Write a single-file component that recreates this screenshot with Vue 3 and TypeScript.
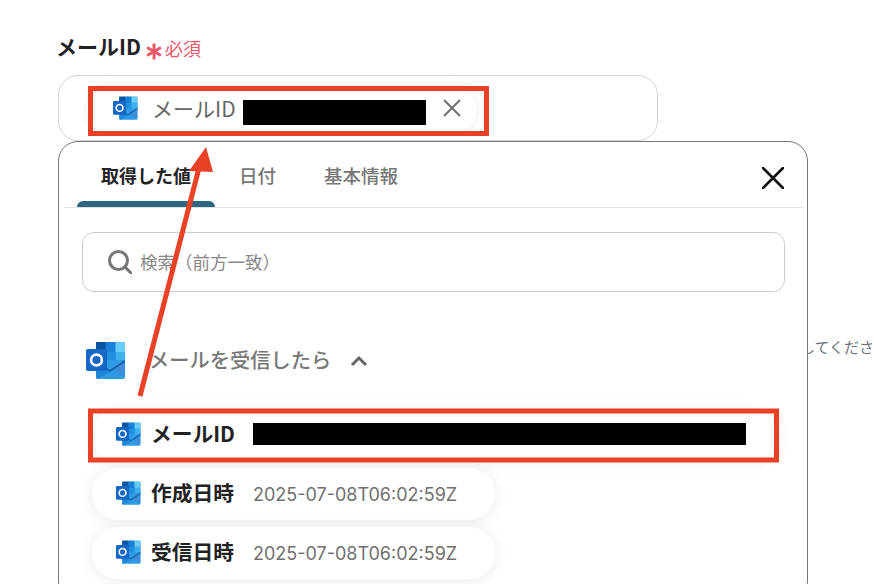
<script setup lang="ts">
interface Row {
  title: string;
  value: string;
}

const tabs = ['取得した値', '日付', '基本情報'];
const rows: Row[] = [
  { title: '作成日時', value: '2025-07-08T06:02:59Z' },
  { title: '受信日時', value: '2025-07-08T06:02:59Z' },
];
</script>

<template>
  <div class="page">
    <svg class="defs" width="0" height="0" aria-hidden="true">
      <symbol id="outlook" viewBox="0 0 40 40">
        <rect x="10" y="1" width="29" height="20" rx="1.5" fill="#0364b8" />
        <rect x="10" y="1" width="9.7" height="10" fill="#0a54a4" />
        <rect x="19.7" y="1" width="9.7" height="10" fill="#1a7fd6" />
        <rect x="29.4" y="1" width="9.6" height="10" fill="#66cdf8" />
        <rect x="10" y="11" width="9.7" height="10" fill="#0f66c0" />
        <rect x="19.7" y="11" width="9.7" height="10" fill="#2090e0" />
        <rect x="29.4" y="11" width="9.6" height="10" fill="#3fb0f0" />
        <path d="M10 19 H39 V36 a2 2 0 0 1 -2 2 H12 a2 2 0 0 1 -2 -2 Z" fill="#2f9ae6" />
        <path d="M39 18 L24 28 L39 36 Z" fill="#3a8fd8" />
        <path d="M10 20 L24 29 L39 19 V21 L24 31 L10 22 Z" fill="#0f5fa8" />
        <path d="M10 22 L24 31 L12 38 a2 2 0 0 1 -2 -2 Z" fill="#1f86da" />
        <rect x="0" y="8" width="21" height="22" rx="2" fill="#1467c5" />
        <circle cx="10.5" cy="19" r="5.4" fill="none" stroke="#fff" stroke-width="2.6" />
      </symbol>
    </svg>

    <div class="label">
      <span class="label-name">メールID</span>
      <span class="label-star">∗</span>
      <span class="label-req">必須</span>
    </div>

    <div class="field">
      <div class="chip">
        <svg class="icon"><use href="#outlook" /></svg>
        <span class="chip-name">メールID</span>
        <span class="redact chip-redact"></span>
        <svg class="chip-x" viewBox="0 0 18 18">
          <path d="M1 1 L17 17 M17 1 L1 17" stroke="#6f6f6f" stroke-width="2" fill="none" />
        </svg>
      </div>
    </div>

    <div class="panel">
      <div class="tabs">
        <div v-for="(tab, i) in tabs" :key="tab" :class="['tab', { active: i === 0 }]">{{ tab }}</div>
        <svg class="close" viewBox="0 0 22 22">
          <path d="M1 1 L21 21 M21 1 L1 21" stroke="#111" stroke-width="2.6" stroke-linecap="round" fill="none" />
        </svg>
      </div>

      <div class="body">
        <div class="search">
          <svg class="search-icon" viewBox="0 0 24 24">
            <circle cx="10.5" cy="10.5" r="9" stroke="#777" stroke-width="3" fill="none" />
            <path d="M17 17 L23 23" stroke="#777" stroke-width="3" stroke-linecap="round" />
          </svg>
          <span class="search-text">検索（前方一致）</span>
        </div>

        <div class="section">
          <svg class="section-icon"><use href="#outlook" /></svg>
          <span class="section-name">メールを受信したら</span>
          <svg class="chevron" viewBox="0 0 18 12">
            <path d="M2 10 L9 3 L16 10" stroke="#666" stroke-width="3" fill="none" />
          </svg>
        </div>

        <div class="rows">
          <div class="row row-wide">
            <svg class="icon"><use href="#outlook" /></svg>
            <span class="row-title">メールID</span>
            <span class="redact row-redact"></span>
          </div>
          <div v-for="row in rows" :key="row.title" class="row">
            <svg class="icon"><use href="#outlook" /></svg>
            <span class="row-title">{{ row.title }}</span>
            <span class="row-value">{{ row.value }}</span>
          </div>
        </div>
      </div>
    </div>

    <div class="behind">してください</div>

    <!-- annotation on top of the screenshot -->
    <svg class="marks" width="874" height="584" viewBox="0 0 874 584">
      <rect x="90.5" y="88.5" width="396" height="45" fill="none" stroke="#e94125" stroke-width="5" />
      <rect x="90.5" y="411" width="686" height="49" fill="none" stroke="#e94125" stroke-width="5" />
      <path d="M140 396 L199 168" stroke="#e94125" stroke-width="5" fill="none" />
      <path d="M206 147 L189 171 L213 172 Z" fill="#e94125" />
    </svg>
  </div>
</template>

<style scoped>
.page {
  position: relative;
  width: 874px;
  height: 584px;
  overflow: hidden;
  box-sizing: border-box;
  padding: 34px 0 0 58px;
  background: #fff;
  font-family: "Noto Sans CJK JP", "Noto Sans", sans-serif;
  color: #222;
}

.defs {
  position: absolute;
}

.label {
  display: flex;
  align-items: center;
  height: 28px;
  margin-bottom: 13px;
}

.label-name {
  margin-left: -2px;
  padding-bottom: 4px;
  font-size: 21px;
  font-weight: 700;
  color: #222;
}

.label-star {
  margin-left: 3px;
  font-size: 24px;
  font-weight: 700;
  color: #eb5a6a;
}

.label-req {
  margin-left: 1px;
  font-size: 18px;
  color: #eb5a6a;
}

.field {
  box-sizing: border-box;
  width: 600px;
  height: 66px;
  padding: 9px 0 0 28px;
  border: 1px solid #cfd4da;
  border-radius: 20px;
}

.chip {
  display: flex;
  align-items: center;
  box-sizing: border-box;
  width: 390px;
  height: 48px;
  padding-left: 26px;
  border-radius: 24px;
  background: #fff;
  box-shadow: 0 0 8px rgba(0, 0, 0, 0.08);
}

.icon {
  flex: none;
  width: 25px;
  height: 25px;
  margin-bottom: 1px;
}

.chip-name {
  margin-left: 14px;
  padding-bottom: 2px;
  font-size: 21px;
  color: #666;
}

.redact {
  flex: none;
  background: #000;
}

.chip-redact {
  width: 183px;
  height: 25px;
  margin-top: 6px;
  margin-left: 7px;
}

.chip-x {
  flex: none;
  width: 18px;
  height: 18px;
  margin-left: 17px;
  margin-bottom: 2px;
}

.panel {
  position: relative;
  z-index: 1;
  box-sizing: border-box;
  width: 750px;
  height: 460px;
  border: 1px solid #777;
  border-radius: 20px;
  background: #fff;
}

.tabs {
  position: relative;
  display: flex;
  height: 65px;
  margin: 0 4px 0 5px;
  padding-left: 13px;
  border-bottom: 1px solid #e2e2e2;
}

.tab {
  position: relative;
  box-sizing: border-box;
  padding: 19px 24px 0;
  font-size: 18.5px;
  font-weight: 500;
  line-height: 28px;
  color: #777;
}

.tab.active {
  width: 138px;
  padding-right: 0;
  font-size: 18px;
  font-weight: 700;
  color: #222;
}

.tab.active::after {
  content: "";
  position: absolute;
  left: 0;
  right: 0;
  bottom: 0;
  height: 6px;
  border-radius: 6px 6px 0 0;
  background: #2c6680;
}

.close {
  position: absolute;
  top: 25px;
  right: 19px;
  width: 22px;
  height: 22px;
}

.body {
  padding: 24px 22px 0 23px;
}

.search {
  display: flex;
  align-items: center;
  box-sizing: border-box;
  height: 60px;
  padding-left: 25px;
  border: 1px solid #ccc;
  border-radius: 12px;
  font-size: 17.5px;
  color: #888;
}

.search-text {
  padding-bottom: 2px;
}

.search-icon {
  width: 24px;
  height: 24px;
  margin-right: 8px;
}

.section {
  display: flex;
  align-items: center;
  height: 40px;
  margin-top: 49px;
  padding-left: 4px;
}

.section-icon {
  flex: none;
  width: 40px;
  height: 40px;
}

.section-name {
  margin-left: 23px;
  padding-bottom: 4px;
  font-size: 20.25px;
  font-weight: 500;
  color: #777;
}

.chevron {
  width: 18px;
  height: 12px;
  margin-left: 19px;
}

.rows {
  display: flex;
  flex-direction: column;
  gap: 7px;
  margin-top: 28px;
  margin-left: 10px;
}

.row {
  display: flex;
  align-items: center;
  box-sizing: border-box;
  width: 403px;
  height: 52px;
  padding-left: 24px;
  border-radius: 26px;
  background: #fff;
  box-shadow: 0 2px 16px rgba(0, 0, 0, 0.08);
}

.row-wide {
  width: 686px;
}

.row-title {
  flex: none;
  width: 102px;
  margin-left: 10px;
  padding-bottom: 4px;
  font-size: 20.75px;
  font-weight: 700;
  color: #222;
}

.row-value {
  font-family: Inter, "Noto Sans", sans-serif;
  font-size: 18px;
  color: #707070;
}

.row-redact {
  width: 493px;
  height: 22px;
  margin-bottom: 2px;
}

.behind {
  position: absolute;
  top: 336px;
  left: 800px;
  font-size: 15px;
  white-space: nowrap;
  color: #6b7280;
}

.marks {
  position: absolute;
  z-index: 2;
  top: 0;
  left: 0;
}
</style>
